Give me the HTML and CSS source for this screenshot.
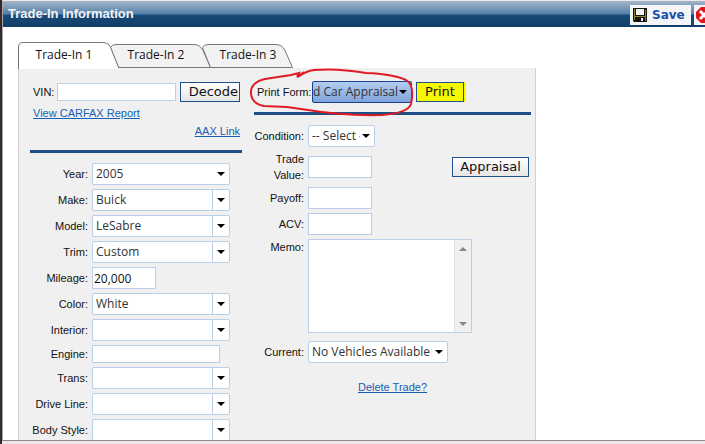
FILE: index.html
```html
<!DOCTYPE html>
<html lang="en">
<head>
<meta charset="utf-8">
<title>Trade-In Information</title>
<link rel="stylesheet" href="styles.css">
</head>
<body>
<div class="window">
  <header class="titlebar">
    <h1>Trade-In Information</h1>
    <div class="actions">
      <button class="save" type="button">
        <svg width="14" height="14" viewBox="0 0 14 14" aria-hidden="true"><path d="M0 0h14v14H1L0 13z" fill="#15150c"/><path d="M1 1h1v11H1zM12 2h1v11h-1zM2 8h10v1H2z" fill="#8c8430"/><path d="M3 1h8v6H3z" fill="#f2f2f2"/><path d="M4 10h6v4H4z" fill="#111"/><path d="M8 10h2v3H8z" fill="#eee"/></svg>
        Save
      </button>
      <button class="close" type="button" aria-label="Close">
        <svg width="16" height="16" viewBox="0 0 16 16" aria-hidden="true"><path d="M5 0h6l5 5v6l-5 5H5l-5-5V5z" fill="#e0141c"/><path d="M4 4l8 8M12 4l-8 8" stroke="#fff" stroke-width="3"/></svg>
      </button>
    </div>
  </header>
  <main>
    <nav class="tabs">
      <a class="tab current" href="#t1"><svg viewBox="0 0 101 27" aria-hidden="true"><path d="M.5 27V5q0-4.500 4.500-4.500H85q6 0 8 6l7.500 19H109"/><path class="cover" d="M1 25h98v2H1z"/></svg><span>Trade-In 1</span></a>
      <a class="tab" href="#t2"><svg viewBox="0 0 101 27" aria-hidden="true"><path d="M.5 5.500Q2 2.500 6 2.500H84q6 0 9 6l7.500 17H8.500z"/></svg><span>Trade-In 2</span></a>
      <a class="tab" href="#t3"><svg viewBox="0 0 101 27" aria-hidden="true"><path d="M.5 5.500Q2 2.500 6 2.500H74q6 0 9 6l7.500 17H8.500z"/></svg><span>Trade-In 3</span></a>
    </nav>
    <form class="panel">
      <section class="vehicle">
        <div class="vin">
          <label for="vin">VIN:</label>
          <input id="vin" type="text">
          <button class="btn decode" type="button">Decode</button>
        </div>
        <a class="carfax" href="#carfax">View CARFAX Report</a>
        <a class="aax" href="#aax">AAX Link</a>
        <hr>
        <div class="fields">
          <label for="year">Year:</label>
          <span class="select"><select id="year"><option>2005</option></select></span>
          <label for="make">Make:</label>
          <span class="select combo"><select id="make"><option>Buick</option></select></span>
          <label for="model">Model:</label>
          <span class="select combo"><select id="model"><option>LeSabre</option></select></span>
          <label for="trim">Trim:</label>
          <span class="select combo"><select id="trim"><option>Custom</option></select></span>
          <label for="mileage">Mileage:</label>
          <input id="mileage" class="amount" type="text" value="20,000">
          <label for="color">Color:</label>
          <span class="select combo"><select id="color"><option>White</option></select></span>
          <label for="interior">Interior:</label>
          <span class="select combo"><select id="interior"><option></option></select></span>
          <label for="engine">Engine:</label>
          <input id="engine" class="engine" type="text">
          <label for="trans">Trans:</label>
          <span class="select combo"><select id="trans"><option></option></select></span>
          <label for="drive">Drive Line:</label>
          <span class="select combo"><select id="drive"><option></option></select></span>
          <label for="body">Body Style:</label>
          <span class="select combo"><select id="body"><option></option></select></span>
        </div>
      </section>
      <section class="trade">
        <div class="print">
          <label for="form">Print Form:</label>
          <span class="select active"><select id="form"><option>d Car Appraisal</option></select></span>
          <button class="btn yellow" type="button">Print</button>
          <svg class="scribble" width="168" height="54" viewBox="0 0 168 54" aria-hidden="true"><path d="M56 6L49 11L51 7L43 9L17 13Q4 16 3 25Q2 37 16 40L39 41L60 44Q95 50 134 49Q160 47 163 38Q167 19 158 14Q145 8 118 7Q90 2 66 4Q58 5 50 11"/></svg>
        </div>
        <hr>
        <div class="details">
          <label for="condition">Condition:</label>
          <span class="select short"><select id="condition"><option>-- Select --</option></select></span>
          <label for="value">Trade Value:</label>
          <div class="value"><input id="value" class="amount" type="text"><button class="btn appraisal" type="button">Appraisal</button></div>
          <label for="payoff">Payoff:</label>
          <input id="payoff" class="amount" type="text">
          <label for="acv">ACV:</label>
          <input id="acv" class="amount" type="text">
          <label class="top" for="memo">Memo:</label>
          <div class="memo"><textarea id="memo"></textarea><span class="scroll"></span></div>
        </div>
        <div class="details existing">
          <label for="current">Current:</label>
          <span class="select vehicles"><select id="current"><option>No Vehicles Available</option></select></span>
        </div>
        <a class="delete" href="#delete">Delete Trade?</a>
      </section>
    </form>
  </main>
</div>
</body>
</html>
```
FILE: styles.css
```css
* { box-sizing: border-box; }
body {
  margin: 0;
  height: 100vh;
  padding: 1px 0 3px 2px;
  overflow: hidden;
  background: linear-gradient(90deg, #302a30 2px, #efe6e9 2px);
  font: 11px/16px "Liberation Sans", Arial, sans-serif;
  color: #111;
}
.window {
  height: 100%;
  display: flex;
  flex-direction: column;
  overflow: hidden;
  background: #fff;
  border-left: 1px solid #aaa5a8;
  border-bottom: 1px solid #8e8689;
}
.titlebar {
  flex: none;
  height: 26px;
  display: flex;
  align-items: center;
  justify-content: space-between;
  padding-left: 5px;
  overflow: hidden;
  background: linear-gradient(#a3b5c9, #5480a8 50%, #174a78 54%, #123f69);
}
h1 { margin: 0; font-size: 13px; line-height: 16px; color: #f2f4f8; }
.actions { display: flex; gap: 3px; padding-top: 1px; }
.save, .close {
  height: 20px;
  display: flex;
  align-items: center;
  border: 0;
  background: #f3f5f9;
}
.save {
  width: 61px;
  padding: 0 3px;
  gap: 5px;
  font: bold 12px/16px "DejaVu Sans", sans-serif;
  color: #1a50a5;
}
.close { width: 11px; padding: 0 2px; overflow: hidden; }
.close svg { flex: none; }
main { flex: 1; padding: 15px 0 0 15px; min-height: 0; display: flex; flex-direction: column; }
.tabs { flex: none; display: flex; height: 26px; }
.tab {
  position: relative;
  width: 92px;
  height: 26px;
  text-align: center;
  color: #111;
  text-decoration: none;
  font: 12px/26px "Open Sans", sans-serif;
}
.tab svg { position: absolute; left: 0; top: 0; width: 101px; height: 27px; fill: #f2f2f2; stroke: #77777a; }
.tab span { position: relative; }
.tab.current { z-index: 1; }
.tab.current svg, .tab .cover { fill: #fff; }
.tab .cover { stroke: none; }
.panel {
  flex: 1;
  min-height: 0;
  overflow: hidden;
  width: 518px;
  display: flex;
  gap: 12px;
  padding: 13px 4px 0 11px;
  background: #f0f0f0;
  border: solid #d0d0d3;
  border-width: 0 1px;
}
.vehicle { width: 212px; flex: none; }
.trade { flex: 1; }
hr { height: 3px; margin: 0; border: 0; background: #1d4e86; }
a { color: #1860b5; }
input, textarea {
  border: 1px solid #bccfe9;
  background: #fff;
  border-radius: 0;
  margin: 0;
  padding: 0 1px;
  font: 12px/18px "Open Sans", sans-serif;
  color: #111;
}
.vin { display: flex; align-items: center; gap: 4px; height: 22px; padding-left: 3px; }
.vin label { width: 20px; }
.vin input { width: 119px; height: 18px; }
.btn {
  height: 20px;
  padding: 0;
  border: 1px solid #204f8d;
  background: linear-gradient(#fff, #e6e6e6);
  font: 13px/18px "DejaVu Sans", sans-serif;
  color: #111;
}
.decode { width: 60px; text-align: right; padding-right: 1px; }
.carfax, .aax { display: block; width: max-content; line-height: 18px; }
.carfax { margin: 1px 0 0 3px; }
.aax { margin: 0 2px 0 auto; }
.vehicle hr { margin: 10px 0; }
.fields, .details { display: grid; column-gap: 4px; row-gap: 4px; align-items: center; }
.fields { grid-template-columns: 58px 138px; }
.fields label, .details label { text-align: right; }
.amount { width: 64px; height: 22px; }
.engine { width: 128px; height: 18px; }
.select { position: relative; display: block; height: 22px; }
.select select {
  appearance: none;
  width: 100%;
  height: 22px;
  margin: 0;
  padding: 0 14px 0 3px;
  border: 1px solid #bccfe9;
  border-radius: 2px;
  background: #fff;
  font: 12px/20px "Open Sans", sans-serif;
  color: #333;
}
.select::after {
  content: "";
  position: absolute;
  right: 5px;
  top: 9px;
  border: 4px solid transparent;
  border-top-color: #000;
  border-bottom: 0;
  pointer-events: none;
}
.combo select { background: linear-gradient(#bccfe9, #bccfe9) right 16px top / 1px 100% no-repeat #fff; }
.print { position: relative; display: flex; align-items: center; gap: 4px; height: 22px; padding-left: 3px; }
.print label { width: 51px; white-space: nowrap; }
.active { width: 100px; }
.active select { border-color: #1b3f91; background: linear-gradient(#b3cdf3, #7fa4da); padding: 0 10px 0 0; }
.yellow { width: 48px; background: #f8f800; box-shadow: 2px 0 0 #f8f800; }
.scribble { position: absolute; left: -6px; top: -15px; fill: none; stroke: #e01b24; stroke-width: 2; pointer-events: none; }
.trade hr { margin: 9px 0 10px; }
.details { grid-template-columns: 50px 1fr; }
.existing { margin-top: 8px; }
.short { width: 67px; }
.value { display: flex; justify-content: space-between; align-items: center; padding: 0 2px 0 0; height: 32px; }
.appraisal { width: 77px; }
.details .top { align-self: start; }
.memo { display: flex; width: 164px; height: 94px; border: 1px solid #bccfe9; background: #fff; }
.memo textarea { flex: 1; min-width: 0; border: 0; resize: none; }
.scroll { position: relative; width: 17px; background: #f0f0f0; border-left: 1px solid #e0e0e3; }
.scroll::before, .scroll::after { content: ""; position: absolute; left: 4px; border: 4px solid transparent; }
.scroll::before { top: 7px; border-top: 0; border-bottom-color: #85858a; }
.scroll::after { bottom: 6px; border-bottom: 0; border-top-color: #85858a; }
.vehicles { width: 140px; }
.delete { display: block; width: max-content; margin: 16px auto 0; }
```
